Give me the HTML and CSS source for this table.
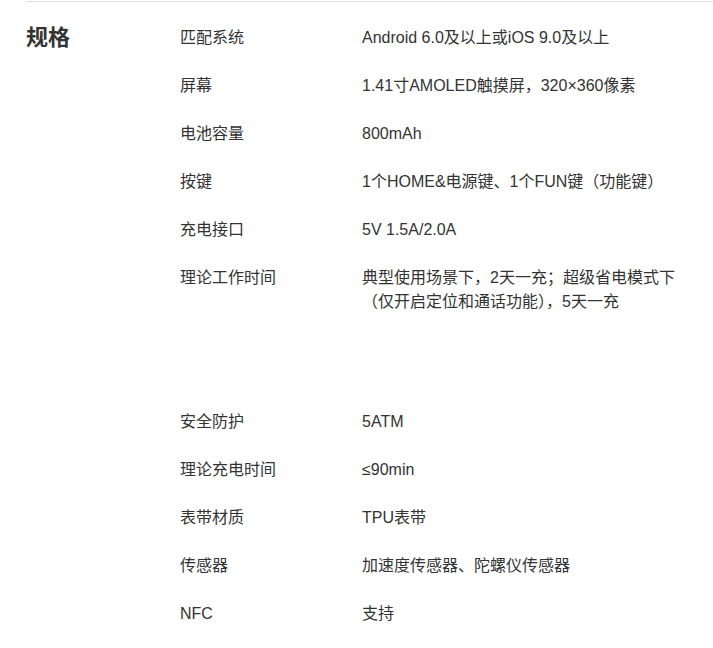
FILE: index.html
```html
<!DOCTYPE html>
<html lang="zh-CN">
<head>
    <meta charset="UTF-8">
    <meta name="viewport" content="width=device-width, initial-scale=1.0">
    <title>规格</title>
    <link rel="stylesheet" href="styles.css">
</head>
<body>
    <section class="spec">
        <h2 class="spec-title">规格</h2>
        <dl class="spec-list">
            <div class="spec-row">
                <dt>匹配系统</dt>
                <dd>Android 6.0及以上或iOS 9.0及以上</dd>
            </div>
            <div class="spec-row">
                <dt>屏幕</dt>
                <dd>1.41寸AMOLED触摸屏，320×360像素</dd>
            </div>
            <div class="spec-row">
                <dt>电池容量</dt>
                <dd>800mAh</dd>
            </div>
            <div class="spec-row">
                <dt>按键</dt>
                <dd>1个HOME&amp;电源键、1个FUN键（功能键）</dd>
            </div>
            <div class="spec-row">
                <dt>充电接口</dt>
                <dd>5V 1.5A/2.0A</dd>
            </div>
            <div class="spec-row spec-row-tall">
                <dt>理论工作时间</dt>
                <dd>典型使用场景下，2天一充；超级省电模式下（仅开启定位和通话功能），5天一充</dd>
            </div>
            <div class="spec-row">
                <dt>安全防护</dt>
                <dd>5ATM</dd>
            </div>
            <div class="spec-row">
                <dt>理论充电时间</dt>
                <dd>≤90min</dd>
            </div>
            <div class="spec-row">
                <dt>表带材质</dt>
                <dd>TPU表带</dd>
            </div>
            <div class="spec-row">
                <dt>传感器</dt>
                <dd>加速度传感器、陀螺仪传感器</dd>
            </div>
            <div class="spec-row">
                <dt>NFC</dt>
                <dd>支持</dd>
            </div>
        </dl>
    </section>
</body>
</html>
```

FILE: styles.css
```css
:root {
    --text-color: #333333;
    --border-color: #e0e0e0;
    --line: 24px;
}

* {
    margin: 0;
    padding: 0;
    box-sizing: border-box;
}

body {
    font-family: "Liberation Sans", "Noto Sans CJK SC", sans-serif;
    font-size: 16px;
    line-height: var(--line);
    color: var(--text-color);
    background: #ffffff;
}

.spec {
    display: flex;
    margin: 1px 0 0 26px;
    padding: 12px 31px 0 0;
    border-top: 1px solid var(--border-color);
}

.spec-title {
    flex: 0 0 154px;
    padding-top: 12px;
    font-size: 22px;
    font-weight: 700;
    line-height: var(--line);
}

.spec-list {
    flex: 1;
}

.spec-row {
    display: flex;
    padding: 12px 0;
}

.spec-row dt {
    flex: 0 0 182px;
}

.spec-row dd {
    flex: 1;
}

.spec-row-tall {
    padding-bottom: 84px;
}
```
